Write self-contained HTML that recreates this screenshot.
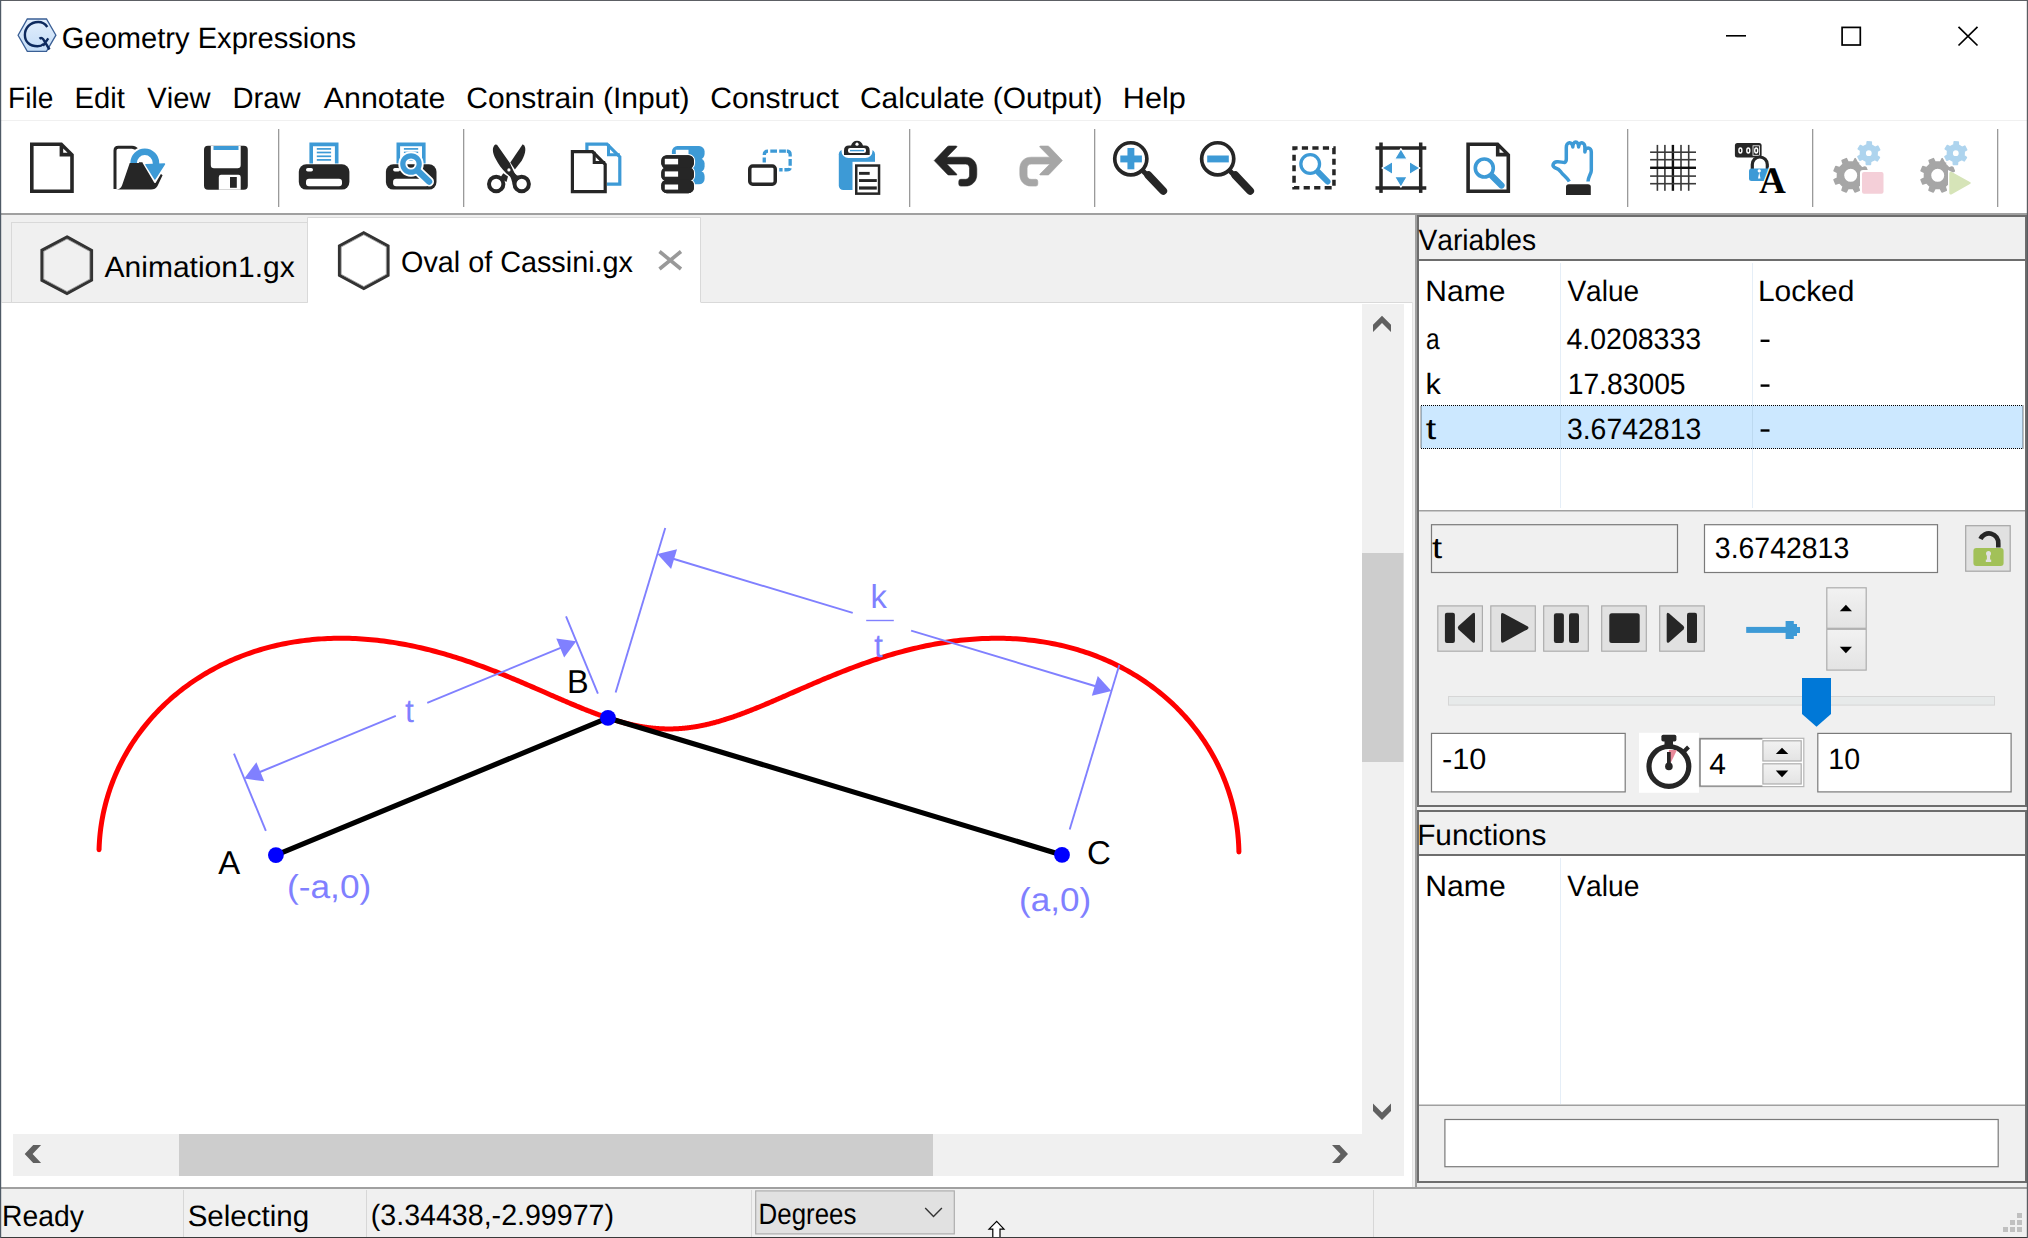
<!DOCTYPE html><html><head><meta charset="utf-8"><style>html,body{margin:0;padding:0;background:#fff;overflow:hidden;}svg{display:block;font-family:"Liberation Sans",sans-serif;font-kerning:none;text-rendering:geometricPrecision;}</style></head><body><svg width="2028" height="1238" viewBox="0 0 2028 1238"><rect x="0" y="0" width="2028" height="1238" fill="#ffffff" />
<rect x="0" y="120" width="2028" height="1" fill="#f0f0f0" />
<rect x="0" y="213" width="2028" height="2" fill="#a0a0a0" />
<rect x="0" y="215" width="1416" height="88" fill="#f0f0f0" />
<defs><linearGradient id="hexg" x1="0" y1="0" x2="0" y2="1"><stop offset="0" stop-color="#e2eefc"/><stop offset="1" stop-color="#c4ddf7"/></linearGradient><linearGradient id="spin" x1="0" y1="0" x2="0" y2="1"><stop offset="0" stop-color="#f2f2f2"/><stop offset="1" stop-color="#e3e3e3"/></linearGradient></defs>
<polygon points="27.3,19 46.5,19 55.9,35.2 46.5,51.3 27.3,51.3 18.1,35.2" fill="url(#hexg)" stroke="#3a5f95" stroke-width="1.3"/>
<path d="M47.3,27 C45,23.5 42,22 38.3,22 C30,22 24.9,28 24.9,35 C24.9,42 30,46.3 37.5,46.3 C40,46.3 42,45.5 43.5,44" fill="none" stroke="#0d2a5e" stroke-width="2.4"/>
<path d="M39.5,38.8 Q41.5,37.2 43.2,39.2 L49.5,49.5 M48.3,38.4 L43,45.8" fill="none" stroke="#0d2a5e" stroke-width="2.4"/>
<text transform="translate(61.84,47.60) scale(0.9864,1)" font-size="29.5" fill="#000">Geometry Expressions</text>
<rect x="1726" y="35" width="20" height="1.6" fill="#000" />
<rect x="1842.1" y="27.4" width="18.2" height="17.6" fill="none" stroke="#000" stroke-width="1.7"/>
<path d="M1958.5,26.8 L1977.5,45.5 M1977.5,26.8 L1958.5,45.5" stroke="#000" stroke-width="1.7"/>
<text transform="translate(8.00,108.10) scale(0.9520,1)" font-size="29.5" fill="#000">File</text>
<text transform="translate(74.61,108.10) scale(0.9876,1)" font-size="29.5" fill="#000">Edit</text>
<text transform="translate(147.37,108.10) scale(0.9877,1)" font-size="29.5" fill="#000">View</text>
<text transform="translate(232.41,108.10) scale(0.9896,1)" font-size="29.5" fill="#000">Draw</text>
<text transform="translate(323.74,108.10) scale(1.0297,1)" font-size="29.5" fill="#000">Annotate</text>
<text transform="translate(466.28,108.10) scale(1.0163,1)" font-size="29.5" fill="#000">Constrain (Input)</text>
<text transform="translate(710.27,108.10) scale(1.0183,1)" font-size="29.5" fill="#000">Construct</text>
<text transform="translate(859.98,108.10) scale(1.0129,1)" font-size="29.5" fill="#000">Calculate (Output)</text>
<text transform="translate(1122.79,108.10) scale(1.0384,1)" font-size="29.5" fill="#000">Help</text>
<rect x="278" y="129" width="1.3" height="78" fill="#9a9a9a" />
<rect x="463" y="129" width="1.3" height="78" fill="#9a9a9a" />
<rect x="909" y="129" width="1.3" height="78" fill="#9a9a9a" />
<rect x="1094" y="129" width="1.3" height="78" fill="#9a9a9a" />
<rect x="1627" y="129" width="1.3" height="78" fill="#9a9a9a" />
<rect x="1812" y="129" width="1.3" height="78" fill="#9a9a9a" />
<rect x="1997" y="129" width="1.3" height="78" fill="#9a9a9a" />
<polygon points="30,142.4 62,142.4 73.8,154.2 73.8,193 30,193" fill="#262626"/>
<polygon points="33.6,146 59.6,146 59.6,156.4 70.2,156.4 70.2,189.4 33.6,189.4" fill="#fff"/>
<polygon points="63.2,148.4 63.2,152.8 67.6,152.8" fill="#fff"/>
<path d="M115,189 V150.5 Q115,147.3 118.3,147.3 H132 Q135.5,147.5 138,150.5" fill="none" stroke="#262626" stroke-width="3"/>
<path d="M116,189.6 Q120.5,189.6 122,185.5 L130,162.3 H146 L162.6,175.3 L157.5,186 Q155.5,189.6 151,189.6 Z" fill="#262626"/>
<path d="M133.6,163 A11.2,11.2 0 0 1 156,163" fill="none" stroke="#fff" stroke-width="10.5"/>
<polygon points="143.5,162.6 166.8,162 155,182" fill="#fff" stroke="#fff" stroke-width="2" stroke-linejoin="round"/>
<path d="M133.6,163 A11.2,11.2 0 0 1 156,163 V165" fill="none" stroke="#3d9ad6" stroke-width="6.5"/>
<polygon points="146,164.7 164.4,164.1 154.9,178.9" fill="#3d9ad6" stroke="#3d9ad6" stroke-width="1.6" stroke-linejoin="round"/>
<rect x="204" y="145.8" width="43.8" height="44" rx="4" fill="#262626"/>
<path d="M210.8,145.8 H240.7 V165 Q240.7,168.2 237.5,168.2 H214 Q210.8,168.2 210.8,165 Z" fill="#fff"/>
<rect x="213.5" y="146" width="25" height="4" fill="#3d9ad6" />
<path d="M218.8,189.8 V177 Q218.8,174.7 221,174.7 H238.5 Q240.7,174.7 240.7,177 V189.8 Z" fill="#fff"/>
<rect x="230" y="177" width="6.8" height="10.8" fill="#262626" />
<path d="M311.2,163.5 V144.4 H336.7 V163.5" fill="none" stroke="#3d9ad6" stroke-width="3.6"/>
<rect x="316.8" y="148.05" width="14.3" height="1.7" fill="#3d9ad6" />
<rect x="316.8" y="151.65" width="14.3" height="1.7" fill="#3d9ad6" />
<rect x="316.8" y="155.45000000000002" width="14.3" height="1.7" fill="#3d9ad6" />
<rect x="316.8" y="159.05" width="14.3" height="1.7" fill="#3d9ad6" />
<rect x="298.8" y="164.3" width="50.6" height="25.3" rx="7.5" fill="#262626"/>
<rect x="306" y="178.8" width="36" height="7.4" rx="3" fill="#fff"/>
<rect x="306" y="168" width="7" height="3.6" rx="1.8" fill="#fff"/>
<path d="M398.29999999999995,163.5 V144.4 H423.79999999999995 V163.5" fill="none" stroke="#3d9ad6" stroke-width="3.6"/>
<rect x="403.9" y="148.05" width="14.3" height="1.7" fill="#3d9ad6" />
<rect x="403.9" y="151.65" width="14.3" height="1.7" fill="#3d9ad6" />
<rect x="403.9" y="155.45000000000002" width="14.3" height="1.7" fill="#3d9ad6" />
<rect x="403.9" y="159.05" width="14.3" height="1.7" fill="#3d9ad6" />
<rect x="385.9" y="164.3" width="50.6" height="25.3" rx="7.5" fill="#262626"/>
<rect x="393.1" y="178.8" width="36" height="7.4" rx="3" fill="#fff"/>
<rect x="393.1" y="168" width="7" height="3.6" rx="1.8" fill="#fff"/>
<circle cx="411" cy="164" r="8.2" fill="none" stroke="#fff" stroke-width="9"/>
<line x1="418.5" y1="171.5" x2="429" y2="181.5" stroke="#fff" stroke-width="10" stroke-linecap="round"/>
<circle cx="411" cy="164" r="8.2" fill="none" stroke="#3d9ad6" stroke-width="5.2"/>
<line x1="418.5" y1="171.5" x2="429" y2="181.5" stroke="#3d9ad6" stroke-width="6.5" stroke-linecap="round"/>
<path d="M495.3,144.5 C491.5,147.5 492.5,153.5 496,159.5 C498.5,164.5 501.5,168.5 506.2,173.2 L509.5,176 L516,175.8 C514,172 512.2,168 510,163.2 L497,144.8 Z" fill="#262626"/>
<path d="M522.7,144.3 C526.5,146.5 526.2,152.5 521.7,160.8 L514.9,169.5 L510.3,162.6 Z" fill="#262626"/>
<path d="M503.3,173.2 L508,176.5 L506.5,182 L500,178 Z" fill="#262626"/>
<path d="M506,172.6 Q510,175.5 511.2,179 L512.8,184.5 L521.7,177 L516.8,175.2 L513.8,172.6 Z" fill="#262626"/>
<circle cx="508.9" cy="169.9" r="1.6" fill="#fff"/>
<circle cx="496.2" cy="184" r="7.2" fill="none" stroke="#262626" stroke-width="4"/>
<circle cx="521.7" cy="184" r="7.2" fill="none" stroke="#262626" stroke-width="4"/>
<path d="M586.9,150.5 V144.1 H607 L619.8,156.8 V184.1 H607" fill="none" stroke="#3d9ad6" stroke-width="3.2"/>
<path d="M608.5,144.3 V154.8 H619.8" fill="none" stroke="#3d9ad6" stroke-width="3"/>
<path d="M572.4,151.6 H592.5 L605.2,164.5 V191.7 H572.4 Z" fill="#fff" stroke="#262626" stroke-width="3.2"/>
<path d="M594.2,151.8 V162.5 H605.2" fill="none" stroke="#262626" stroke-width="3"/>
<rect x="671.9" y="146.1" width="32.7" height="13.5" rx="5.5" fill="#3d9ad6"/>
<rect x="671.9" y="158.1" width="32.7" height="14.0" rx="5.5" fill="#3d9ad6"/>
<rect x="671.9" y="170.6" width="32.7" height="13.700000000000017" rx="5.5" fill="#3d9ad6"/>
<rect x="675.8" y="149.8" width="12.7" height="4.5" fill="#fff" />
<rect x="661.3" y="155.2" width="32.6" height="13.600000000000023" rx="5.5" fill="#262626" stroke="#fff" stroke-width="2.4" paint-order="stroke"/>
<rect x="661.3" y="167.2" width="32.6" height="14.0" rx="5.5" fill="#262626" stroke="#fff" stroke-width="2.4" paint-order="stroke"/>
<rect x="661.3" y="179.7" width="32.6" height="13.5" rx="5.5" fill="#262626" stroke="#fff" stroke-width="2.4" paint-order="stroke"/>
<rect x="661.3" y="155.2" width="32.6" height="13.600000000000023" rx="5.5" fill="#262626"/>
<rect x="661.3" y="167.2" width="32.6" height="14.0" rx="5.5" fill="#262626"/>
<rect x="661.3" y="179.7" width="32.6" height="13.5" rx="5.5" fill="#262626"/>
<rect x="664.8" y="158.8" width="13.3" height="5.599999999999994" fill="#fff" />
<rect x="664.8" y="171.4" width="13.3" height="5.299999999999983" fill="#fff" />
<rect x="664.8" y="184.5" width="13.3" height="5.099999999999994" fill="#fff" />
<path d="M764.25,155 Q764.25,151.15 767.9,151.15 H768 M764.25,157.5 V162.5 M770.3,151.15 H777 M779.2,151.15 H785.9 M788.4,151.15 H786.8 Q790.15,151.15 790.15,154.6 V156.6 M790.15,159.1 V165.7 M790.15,168.2 Q789.8,169.75 786.7,169.75 H784.4 M782.6,169.75 H779.2" fill="none" stroke="#3d9ad6" stroke-width="3.3"/>
<rect x="749.75" y="166.05" width="25.5" height="18.2" rx="3" fill="#fff" stroke="#262626" stroke-width="3.5"/>
<rect x="838.8" y="149.7" width="36.2" height="40.3" rx="4.5" fill="#3d9ad6"/>
<rect x="841.5" y="139" width="31" height="19" rx="7" fill="#fff"/>
<path d="M844,155 V150.5 Q844,145.5 849,145.5 H851 Q852.5,140.8 857,140.8 Q861.5,140.8 863,145.5 H865 Q869.7,145.5 869.7,150.5 V155 Z" fill="#262626"/>
<circle cx="857" cy="144.2" r="1.6" fill="#fff"/>
<rect x="848" y="148" width="18" height="5" rx="2" fill="#fff"/>
<rect x="850" y="149.9" width="14" height="1.4" fill="#3d9ad6" />
<rect x="852.5" y="161.8" width="30.3" height="35.6" fill="#fff"/>
<rect x="856.25" y="165.55" width="22.8" height="28.1" fill="#fff" stroke="#262626" stroke-width="2.5"/>
<rect x="859" y="171.9" width="10.7" height="2.9" fill="#262626" />
<rect x="859" y="179.1" width="17.8" height="2.9" fill="#262626" />
<rect x="859" y="186.4" width="17.8" height="3.2" fill="#262626" />
<path d="M934.2,160.6 L947.5,146.6 Q948.2,146 949,146 H956.5 Q957.3,146.4 956.6,147.2 L946.8,157.2 H965.5 C972.5,157.2 976.8,162 976.8,169 V174.5 C976.8,181.3 972,186.1 965.5,186.1 H960.8 Q958.8,186.1 958.8,184 V181.4 Q958.8,179.3 960.8,179.3 H965.5 C968.1,179.3 969.5,177.5 969.5,175 V168.5 C969.5,166 968.1,164.1 965.5,164.1 H946.8 L956.6,174 Q957.3,174.8 956.5,175 H949 Q948.2,175 947.5,174.4 Z" fill="#262626" stroke="#262626" stroke-width="0.6" stroke-linejoin="round"/>
<path transform="translate(1996.6,0) scale(-1,1)" d="M934.2,160.6 L947.5,146.6 Q948.2,146 949,146 H956.5 Q957.3,146.4 956.6,147.2 L946.8,157.2 H965.5 C972.5,157.2 976.8,162 976.8,169 V174.5 C976.8,181.3 972,186.1 965.5,186.1 H960.8 Q958.8,186.1 958.8,184 V181.4 Q958.8,179.3 960.8,179.3 H965.5 C968.1,179.3 969.5,177.5 969.5,175 V168.5 C969.5,166 968.1,164.1 965.5,164.1 H946.8 L956.6,174 Q957.3,174.8 956.5,175 H949 Q948.2,175 947.5,174.4 Z" fill="#a6a6a6" stroke="#a6a6a6" stroke-width="0.6" stroke-linejoin="round"/>
<circle cx="1130.8" cy="158.8" r="16.05" fill="none" stroke="#262626" stroke-width="3.7"/>
<line x1="1141.8" y1="169.8" x2="1147.8" y2="175.8" stroke="#262626" stroke-width="5"/>
<line x1="1148.3999999999999" y1="175.20000000000002" x2="1163.2" y2="190.9" stroke="#262626" stroke-width="7.9" stroke-linecap="round"/>
<rect x="1120.3" y="155.5" width="21.6" height="6.9" fill="#3d9ad6"/>
<rect x="1127.45" y="148.0" width="6.9" height="21.3" fill="#3d9ad6"/>
<circle cx="1217.7" cy="158.8" r="16.05" fill="none" stroke="#262626" stroke-width="3.7"/>
<line x1="1228.7" y1="169.8" x2="1234.7" y2="175.8" stroke="#262626" stroke-width="5"/>
<line x1="1235.3" y1="175.20000000000002" x2="1250.1000000000001" y2="190.9" stroke="#262626" stroke-width="7.9" stroke-linecap="round"/>
<rect x="1207.2" y="155.5" width="21.6" height="6.9" fill="#3d9ad6"/>
<rect x="1294.05" y="147.95" width="39.9" height="39.9" fill="none" stroke="#262626" stroke-width="3.5" stroke-dasharray="3.5,4.3,6.2,4.3,6.2,4.3,6.2,4.3,3.5,0"/>
<circle cx="1310.2" cy="164" r="9.35" fill="none" stroke="#3d9ad6" stroke-width="3.3"/>
<line x1="1318.5" y1="172.3" x2="1327.5" y2="181.5" stroke="#3d9ad6" stroke-width="6" stroke-linecap="round"/>
<rect x="1375.5" y="146.25" width="50.8" height="3.5" fill="#262626" />
<rect x="1375.5" y="186.25" width="50.8" height="3.5" fill="#262626" />
<rect x="1379.25" y="142.5" width="3.5" height="50.4" fill="#262626" />
<rect x="1418.95" y="142.5" width="3.5" height="50.4" fill="#262626" />
<polygon points="1394.5,159.2 1407.3,159.2 1400.9,148.6" fill="#3d9ad6" stroke="#fff" stroke-width="1.2" stroke-linejoin="round"/>
<polygon points="1394.5,176.6 1407.3,176.6 1400.9,187.2" fill="#3d9ad6" stroke="#fff" stroke-width="1.2" stroke-linejoin="round"/>
<polygon points="1392.6,161.6 1392.6,174.4 1382,168" fill="#3d9ad6" stroke="#fff" stroke-width="1.2" stroke-linejoin="round"/>
<polygon points="1409.4,161.6 1409.4,174.4 1420,168" fill="#3d9ad6" stroke="#fff" stroke-width="1.2" stroke-linejoin="round"/>
<g transform="translate(1436.3,0)"><polygon points="30,142.4 62,142.4 73.8,154.2 73.8,193 30,193" fill="#262626"/><polygon points="33.6,146 59.6,146 59.6,156.4 70.2,156.4 70.2,189.4 33.6,189.4" fill="#fff"/><polygon points="63.2,148.4 63.2,152.8 67.6,152.8" fill="#fff"/></g>
<circle cx="1484.3" cy="168" r="9" fill="none" stroke="#3d9ad6" stroke-width="3.6"/>
<line x1="1492" y1="176" x2="1501.5" y2="185.5" stroke="#3d9ad6" stroke-width="6.2" stroke-linecap="round"/>
<path d="M1569.3,181.5 C1567,177.5 1563.5,175.5 1561,172 C1559,169 1557.5,168.5 1554.5,167.5 C1551.8,166 1553,162.2 1557,161.8 C1560,161.5 1562,162.5 1564.5,162.5 C1566,162 1566.3,160.5 1566.3,159 V147.5 A3.25,4.5 0 0 1 1572.8,147 A2.9,5 0 0 1 1578.6,147 A3.15,4.5 0 0 1 1584.9,147.5 V152 A3.2,4 0 0 1 1591.3,152 V170.5 C1591.3,173.5 1588.3,176.5 1588,181.5" fill="none" stroke="#3d9ad6" stroke-width="3.5" stroke-linejoin="round"/>
<path d="M1566,195 V187 Q1566,184.3 1568.8,184.3 H1588 Q1590.8,184.3 1590.8,187 V195 Z" fill="#262626"/>
<rect x="1656.6000000000001" y="144.9" width="1.6" height="45.9" fill="#3a3a3a" />
<rect x="1664.1000000000001" y="144.9" width="1.6" height="45.9" fill="#3a3a3a" />
<rect x="1671.7" y="144.9" width="2.4" height="45.9" fill="#111" />
<rect x="1680.2" y="144.9" width="1.6" height="45.9" fill="#3a3a3a" />
<rect x="1687.9" y="144.9" width="1.6" height="45.9" fill="#3a3a3a" />
<rect x="1650.1" y="151.39999999999998" width="45.9" height="1.6" fill="#3a3a3a" />
<rect x="1650.1" y="158.89999999999998" width="45.9" height="1.6" fill="#3a3a3a" />
<rect x="1650.1" y="166.60000000000002" width="45.9" height="2.4" fill="#111" />
<rect x="1650.1" y="175.29999999999998" width="45.9" height="1.6" fill="#3a3a3a" />
<rect x="1650.1" y="182.89999999999998" width="45.9" height="1.6" fill="#3a3a3a" />
<rect x="1734.9" y="143" width="26.7" height="14.5" rx="2.5" fill="#262626"/>
<ellipse cx="1740.4" cy="150.5" rx="1.5" ry="2.5" fill="none" stroke="#fff" stroke-width="1.4"/>
<ellipse cx="1748.3" cy="150.5" rx="1.5" ry="2.5" fill="none" stroke="#fff" stroke-width="1.4"/>
<ellipse cx="1756.2" cy="150.5" rx="1.5" ry="2.5" fill="none" stroke="#fff" stroke-width="1.4"/>
<rect x="1753" y="145.8" width="6.5" height="9.5" fill="none" stroke="#fff" stroke-width="0.8"/>
<path d="M1752.3,169 V164.5 A7.5,7.5 0 0 1 1767.3,164.5 V169" fill="none" stroke="#262626" stroke-width="3.2"/>
<path d="M1751.5,168.5 H1770.5 L1764,181 H1751.5 Q1749,181 1749,178.5 V171 Q1749,168.5 1751.5,168.5 Z" fill="#3d9ad6"/>
<path d="M1759.2,172.5 a1.6,1.6 0 1 1 0.1,0 L1760.5,178.5 H1758 Z" fill="#fff"/>
<text stroke="#fff" stroke-width="2.5" paint-order="stroke" font-family="Liberation Serif, serif" transform="translate(1758.94,192.60) scale(0.9909,1)" font-size="37.5" fill="#000" font-weight="bold">A</text>
<path d="M1863.73,177.94 L1867.31,179.77 L1865.54,183.99 L1861.73,182.73 L1861.11,183.57 L1858.90,185.77 L1858.05,186.39 L1859.28,190.20 L1855.05,191.94 L1853.25,188.35 L1852.22,188.51 L1849.09,188.50 L1848.06,188.33 L1846.23,191.91 L1842.01,190.14 L1843.27,186.33 L1842.43,185.71 L1840.23,183.50 L1839.61,182.65 L1835.80,183.88 L1834.06,179.65 L1837.65,177.85 L1837.49,176.82 L1837.50,173.69 L1837.67,172.66 L1834.09,170.83 L1835.86,166.61 L1839.67,167.87 L1840.29,167.03 L1842.50,164.83 L1843.35,164.21 L1842.12,160.40 L1846.35,158.66 L1848.15,162.25 L1849.18,162.09 L1852.31,162.10 L1853.34,162.27 L1855.17,158.69 L1859.39,160.46 L1858.13,164.27 L1858.97,164.89 L1861.17,167.10 L1861.79,167.95 L1865.60,166.72 L1867.34,170.95 L1863.75,172.75 L1863.91,173.78 L1863.90,176.91 Z M1858.0,175.3 A7.3,7.3 0 1 0 1843.4,175.3 A7.3,7.3 0 1 0 1858.0,175.3 Z" fill="#a6a6a6" fill-rule="evenodd" stroke="#a6a6a6" stroke-width="1.6" stroke-linejoin="round"/>
<path d="M1876.82,155.68 L1879.37,157.47 L1877.22,160.89 L1874.51,159.36 L1873.83,159.93 L1871.51,161.15 L1870.66,161.39 L1870.39,164.49 L1866.35,164.33 L1866.32,161.22 L1865.49,160.92 L1863.27,159.52 L1862.64,158.91 L1859.82,160.22 L1857.93,156.65 L1860.61,155.06 L1860.46,154.20 L1860.56,151.57 L1860.78,150.72 L1858.23,148.93 L1860.38,145.51 L1863.09,147.04 L1863.77,146.47 L1866.09,145.25 L1866.94,145.01 L1867.21,141.91 L1871.25,142.07 L1871.28,145.18 L1872.11,145.48 L1874.33,146.88 L1874.96,147.49 L1877.78,146.18 L1879.67,149.75 L1876.99,151.34 L1877.14,152.20 L1877.04,154.83 Z M1872.5,153.2 A3.7,3.7 0 1 0 1865.1,153.2 A3.7,3.7 0 1 0 1872.5,153.2 Z" fill="#fff" fill-rule="evenodd" stroke="#fff" stroke-width="5" stroke-linejoin="round"/>
<path d="M1876.82,155.68 L1879.37,157.47 L1877.22,160.89 L1874.51,159.36 L1873.83,159.93 L1871.51,161.15 L1870.66,161.39 L1870.39,164.49 L1866.35,164.33 L1866.32,161.22 L1865.49,160.92 L1863.27,159.52 L1862.64,158.91 L1859.82,160.22 L1857.93,156.65 L1860.61,155.06 L1860.46,154.20 L1860.56,151.57 L1860.78,150.72 L1858.23,148.93 L1860.38,145.51 L1863.09,147.04 L1863.77,146.47 L1866.09,145.25 L1866.94,145.01 L1867.21,141.91 L1871.25,142.07 L1871.28,145.18 L1872.11,145.48 L1874.33,146.88 L1874.96,147.49 L1877.78,146.18 L1879.67,149.75 L1876.99,151.34 L1877.14,152.20 L1877.04,154.83 Z M1872.5,153.2 A3.7,3.7 0 1 0 1865.1,153.2 A3.7,3.7 0 1 0 1872.5,153.2 Z" fill="#aed4ee" fill-rule="evenodd" stroke="#aed4ee" stroke-width="1.6" stroke-linejoin="round"/>
<rect x="1860" y="170" width="25.5" height="25.7" rx="3" fill="#fff"/>
<rect x="1862" y="172.1" width="21.5" height="21.6" rx="2" fill="#f4cfd8"/>
<path d="M1950.73,177.94 L1954.31,179.77 L1952.54,183.99 L1948.73,182.73 L1948.11,183.57 L1945.90,185.77 L1945.05,186.39 L1946.28,190.20 L1942.05,191.94 L1940.25,188.35 L1939.22,188.51 L1936.09,188.50 L1935.06,188.33 L1933.23,191.91 L1929.01,190.14 L1930.27,186.33 L1929.43,185.71 L1927.23,183.50 L1926.61,182.65 L1922.80,183.88 L1921.06,179.65 L1924.65,177.85 L1924.49,176.82 L1924.50,173.69 L1924.67,172.66 L1921.09,170.83 L1922.86,166.61 L1926.67,167.87 L1927.29,167.03 L1929.50,164.83 L1930.35,164.21 L1929.12,160.40 L1933.35,158.66 L1935.15,162.25 L1936.18,162.09 L1939.31,162.10 L1940.34,162.27 L1942.17,158.69 L1946.39,160.46 L1945.13,164.27 L1945.97,164.89 L1948.17,167.10 L1948.79,167.95 L1952.60,166.72 L1954.34,170.95 L1950.75,172.75 L1950.91,173.78 L1950.90,176.91 Z M1945.0,175.3 A7.3,7.3 0 1 0 1930.4,175.3 A7.3,7.3 0 1 0 1945.0,175.3 Z" fill="#a6a6a6" fill-rule="evenodd" stroke="#a6a6a6" stroke-width="1.6" stroke-linejoin="round"/>
<path d="M1963.82,155.68 L1966.37,157.47 L1964.22,160.89 L1961.51,159.36 L1960.83,159.93 L1958.51,161.15 L1957.66,161.39 L1957.39,164.49 L1953.35,164.33 L1953.32,161.22 L1952.49,160.92 L1950.27,159.52 L1949.64,158.91 L1946.82,160.22 L1944.93,156.65 L1947.61,155.06 L1947.46,154.20 L1947.56,151.57 L1947.78,150.72 L1945.23,148.93 L1947.38,145.51 L1950.09,147.04 L1950.77,146.47 L1953.09,145.25 L1953.94,145.01 L1954.21,141.91 L1958.25,142.07 L1958.28,145.18 L1959.11,145.48 L1961.33,146.88 L1961.96,147.49 L1964.78,146.18 L1966.67,149.75 L1963.99,151.34 L1964.14,152.20 L1964.04,154.83 Z M1959.5,153.2 A3.7,3.7 0 1 0 1952.1,153.2 A3.7,3.7 0 1 0 1959.5,153.2 Z" fill="#fff" fill-rule="evenodd" stroke="#fff" stroke-width="5" stroke-linejoin="round"/>
<path d="M1963.82,155.68 L1966.37,157.47 L1964.22,160.89 L1961.51,159.36 L1960.83,159.93 L1958.51,161.15 L1957.66,161.39 L1957.39,164.49 L1953.35,164.33 L1953.32,161.22 L1952.49,160.92 L1950.27,159.52 L1949.64,158.91 L1946.82,160.22 L1944.93,156.65 L1947.61,155.06 L1947.46,154.20 L1947.56,151.57 L1947.78,150.72 L1945.23,148.93 L1947.38,145.51 L1950.09,147.04 L1950.77,146.47 L1953.09,145.25 L1953.94,145.01 L1954.21,141.91 L1958.25,142.07 L1958.28,145.18 L1959.11,145.48 L1961.33,146.88 L1961.96,147.49 L1964.78,146.18 L1966.67,149.75 L1963.99,151.34 L1964.14,152.20 L1964.04,154.83 Z M1959.5,153.2 A3.7,3.7 0 1 0 1952.1,153.2 A3.7,3.7 0 1 0 1959.5,153.2 Z" fill="#aed4ee" fill-rule="evenodd" stroke="#aed4ee" stroke-width="1.6" stroke-linejoin="round"/>
<polygon points="1948,170 1973,183 1948,196" fill="#fff"/>
<path d="M1951,172.5 L1970,183 L1951,193.8 Q1950,194 1950,192.5 V174 Q1950,172 1951,172.5 Z" fill="#d6e4b8" stroke="#d6e4b8" stroke-width="1.5" stroke-linejoin="round"/>
<rect x="0" y="215" width="1416" height="88" fill="#f0f0f0" />
<rect x="11.5" y="222.5" width="296" height="80" fill="#f0f0f0" stroke="#d9d9d9" stroke-width="1"/>
<rect x="2" y="302" width="1411" height="885" fill="#ffffff" />
<rect x="2" y="302" width="306" height="1" fill="#d9d9d9" />
<rect x="701" y="302" width="712" height="1" fill="#d9d9d9" />
<path d="M307.5,302.5 V217.5 H700.5 V302.5" fill="#ffffff" stroke="#d9d9d9" stroke-width="1"/>
<polygon points="67,237 91.5,250.334 91.5,280.166 67,293.5 42,280.166 42,250.334" fill="none" stroke="#333" stroke-width="3.2"/>
<polygon points="67,237 91.5,250.334 91.5,280.166 67,293.5 42,280.166 42,250.334" fill="none" stroke="#999" stroke-width="0.9" transform="translate(67,265.25) scale(0.93) translate(-67,-265.25)"/>
<polygon points="363.8,232.8 388,245.9452 388,275.3548 363.8,288.5 339.5,275.3548 339.5,245.9452" fill="none" stroke="#333" stroke-width="3.2"/>
<polygon points="363.8,232.8 388,245.9452 388,275.3548 363.8,288.5 339.5,275.3548 339.5,245.9452" fill="none" stroke="#999" stroke-width="0.9" transform="translate(363.8,260.65) scale(0.93) translate(-363.8,-260.65)"/>
<text transform="translate(104.54,277.00) scale(1.0173,1)" font-size="29.5" fill="#000">Animation1.gx</text>
<text transform="translate(401.04,271.70) scale(0.9754,1)" font-size="29.5" fill="#000">Oval of Cassini.gx</text>
<path d="M659.5,251.5 L681,269 M681,251.5 L659.5,269" stroke="#999" stroke-width="3.6"/>
<rect x="1362" y="304" width="42" height="830" fill="#f0f0f0" />
<rect x="1362" y="553" width="41.5" height="209" fill="#cdcdcd" />
<rect x="13" y="1134" width="1391" height="42" fill="#f0f0f0" />
<rect x="179" y="1134" width="754" height="42" fill="#cdcdcd" />
<polygon points="1382,315.7 1391,324.7 1391,332 1382,323 1373,332 1373,324.7" fill="#606060"/>
<polygon points="1382,1120 1391,1111 1391,1103.6 1382,1112.6 1373,1103.6 1373,1111" fill="#606060"/>
<polygon points="24.7,1153.9 33.2,1145 41.1,1145 32.6,1153.9 41.1,1162.9 33.2,1162.9" fill="#606060"/>
<polygon points="1348,1153.9 1339.5,1145 1332,1145 1340.5,1153.9 1332,1162.9 1339.5,1162.9" fill="#606060"/>
<rect x="1412" y="302" width="1" height="886" fill="#e3e3e3" />
<rect x="1415" y="215" width="2" height="973" fill="#a0a0a0" />
<rect x="1413" y="215" width="2" height="973" fill="#f0f0f0" />
<path d="M99.05,849.70 L99.13,847.23 L99.24,844.75 L99.38,842.28 L99.55,839.81 L99.75,837.34 L99.98,834.87 L100.24,832.41 L100.53,829.95 L100.85,827.49 L101.21,825.03 L101.59,822.58 L102.00,820.14 L102.44,817.69 L102.91,815.25 L103.41,812.82 L103.95,810.39 L104.51,807.97 L105.10,805.55 L105.72,803.14 L106.37,800.73 L107.05,798.34 L107.76,795.94 L108.50,793.56 L109.27,791.18 L110.07,788.81 L110.90,786.45 L111.75,784.10 L112.64,781.76 L113.56,779.42 L114.50,777.10 L115.48,774.78 L116.48,772.48 L117.51,770.18 L118.57,767.89 L119.66,765.62 L120.78,763.36 L121.93,761.10 L123.10,758.86 L124.31,756.64 L125.54,754.42 L126.80,752.21 L128.09,750.02 L129.41,747.85 L130.75,745.68 L132.12,743.53 L133.53,741.39 L134.95,739.27 L136.41,737.16 L137.89,735.07 L139.40,732.99 L140.94,730.93 L142.50,728.88 L144.10,726.85 L145.71,724.83 L147.36,722.83 L149.03,720.85 L150.73,718.89 L152.45,716.94 L154.20,715.01 L155.98,713.10 L157.78,711.20 L159.61,709.33 L161.47,707.47 L163.35,705.63 L165.25,703.81 L167.18,702.01 L169.14,700.23 L171.12,698.47 L173.12,696.73 L175.15,695.02 L177.20,693.32 L179.28,691.64 L181.38,689.99 L183.51,688.35 L185.66,686.74 L187.83,685.15 L190.03,683.58 L192.24,682.04 L194.49,680.52 L196.75,679.02 L199.04,677.54 L201.35,676.09 L203.68,674.66 L206.04,673.26 L208.41,671.88 L210.81,670.52 L213.23,669.19 L215.67,667.89 L218.13,666.61 L220.61,665.35 L223.11,664.12 L225.64,662.92 L228.18,661.75 L230.74,660.60 L233.32,659.47 L235.92,658.38 L238.55,657.31 L241.18,656.27 L243.84,655.25 L246.52,654.26 L249.21,653.31 L251.93,652.37 L254.65,651.47 L257.40,650.60 L260.17,649.75 L262.95,648.94 L265.74,648.15 L268.56,647.39 L271.38,646.66 L274.23,645.96 L277.09,645.29 L279.96,644.65 L282.85,644.04 L285.75,643.46 L288.67,642.91 L291.60,642.39 L294.54,641.90 L297.50,641.44 L300.47,641.02 L303.45,640.62 L306.44,640.25 L309.44,639.92 L312.46,639.61 L315.48,639.34 L318.52,639.09 L321.56,638.88 L324.61,638.70 L327.67,638.55 L330.74,638.43 L333.82,638.35 L336.90,638.29 L339.99,638.26 L343.09,638.27 L346.19,638.30 L349.30,638.37 L352.41,638.47 L355.53,638.59 L358.64,638.75 L361.77,638.94 L364.89,639.15 L368.01,639.40 L371.14,639.67 L374.26,639.98 L377.39,640.31 L380.51,640.67 L383.63,641.06 L386.75,641.48 L389.87,641.93 L392.98,642.40 L396.08,642.89 L399.18,643.42 L402.27,643.97 L405.36,644.54 L408.44,645.14 L411.50,645.76 L414.56,646.40 L417.61,647.07 L420.65,647.76 L423.67,648.47 L426.68,649.20 L429.67,649.95 L432.65,650.71 L435.62,651.50 L438.56,652.30 L441.49,653.12 L444.40,653.95 L447.30,654.80 L450.17,655.66 L453.02,656.53 L455.85,657.42 L458.65,658.31 L461.43,659.22 L464.19,660.13 L466.92,661.06 L469.63,661.98 L472.31,662.92 L474.97,663.86 L477.59,664.80 L480.19,665.75 L482.76,666.70 L485.30,667.64 L487.81,668.59 L490.30,669.54 L492.75,670.49 L495.17,671.44 L497.56,672.38 L499.92,673.32 L502.25,674.26 L504.55,675.19 L506.82,676.12 L509.05,677.03 L511.26,677.95 L513.43,678.85 L515.57,679.75 L517.68,680.64 L519.76,681.52 L521.81,682.39 L523.83,683.26 L525.82,684.11 L527.78,684.95 L529.71,685.79 L531.60,686.61 L533.48,687.42 L535.32,688.22 L537.13,689.01 L538.91,689.79 L540.67,690.56 L542.40,691.32 L544.11,692.06 L545.78,692.80 L547.43,693.52 L549.06,694.23 L550.66,694.93 L552.23,695.62 L553.79,696.30 L555.31,696.97 L556.82,697.62 L558.30,698.27 L559.76,698.90 L561.20,699.52 L562.62,700.13 L564.01,700.73 L565.39,701.32 L566.74,701.90 L568.08,702.47 L569.39,703.03 L570.69,703.58 L571.97,704.12 L573.23,704.65 L574.47,705.17 L575.70,705.68 L576.91,706.19 L578.10,706.68 L579.28,707.16 L580.44,707.64 L581.59,708.10 L582.72,708.56 L583.83,709.01 L584.93,709.45 L586.02,709.88 L587.10,710.31 L588.16,710.72 L589.20,711.13 L590.24,711.53 L591.26,711.93 L592.27,712.31 L593.27,712.69 L594.26,713.07 L595.23,713.43 L596.20,713.79 L597.15,714.14 L598.10,714.49 L599.03,714.83 L599.95,715.16 L600.86,715.49 L601.77,715.81 L602.66,716.12 L603.55,716.43 L604.42,716.73 L605.29,717.03 L606.15,717.32 L607.00,717.61 L607.84,717.89 L608.67,718.17 L609.50,718.44 L610.32,718.70 L611.13,718.96 L611.93,719.22 L612.73,719.47 L613.52,719.72 L614.30,719.96 L615.08,720.19 L615.85,720.43 L616.61,720.65 L617.37,720.88 L618.12,721.10 L618.86,721.31 L619.60,721.52 L620.34,721.73 L621.06,721.93 L621.79,722.13 L622.50,722.33 L623.21,722.52 L623.92,722.71 L624.62,722.89 L625.32,723.07 L626.01,723.25 L626.70,723.42 L627.38,723.59 L628.06,723.76 L628.74,723.92 L629.41,724.08 L630.07,724.24 L630.74,724.39 L631.39,724.54 L632.05,724.69 L632.70,724.83 L633.35,724.97 L633.99,725.11 L634.63,725.25 L635.27,725.38 L635.90,725.51 L636.53,725.64 L637.16,725.76 L637.78,725.88 L638.40,726.00 L639.02,726.11 L639.63,726.23 L640.25,726.34 L640.86,726.44 L641.46,726.55 L642.07,726.65 L642.67,726.75 L643.27,726.85 L643.87,726.94 L644.46,727.03 L645.05,727.12 L645.64,727.21 L646.23,727.30 L646.82,727.38 L647.40,727.46 L647.98,727.54 L648.56,727.61 L649.14,727.69 L649.72,727.76 L650.29,727.83 L650.87,727.90 L651.44,727.96 L652.01,728.02 L652.58,728.08 L653.14,728.14 L653.71,728.20 L654.28,728.25 L654.84,728.30 L655.40,728.35 L655.96,728.40 L656.52,728.45 L657.08,728.49 L657.64,728.53 L658.20,728.57 L658.75,728.61 L659.31,728.64 L659.86,728.68 L660.41,728.71 L660.97,728.74 L661.52,728.76 L662.07,728.79 L662.62,728.81 L663.17,728.83 L663.72,728.85 L664.27,728.87 L664.82,728.89 L665.37,728.90 L665.92,728.91 L666.46,728.92 L667.01,728.93 L667.56,728.94 L668.11,728.94 L668.65,728.94 L669.20,728.94 L669.75,728.94 L670.30,728.94 L670.84,728.93 L671.39,728.92 L671.94,728.91 L672.49,728.90 L673.04,728.89 L673.59,728.87 L674.14,728.86 L674.69,728.84 L675.24,728.81 L675.79,728.79 L676.34,728.77 L676.89,728.74 L677.44,728.71 L678.00,728.68 L678.55,728.65 L679.11,728.61 L679.66,728.57 L680.22,728.53 L680.78,728.49 L681.33,728.45 L681.89,728.40 L682.45,728.36 L683.02,728.31 L683.58,728.25 L684.14,728.20 L684.71,728.15 L685.28,728.09 L685.85,728.03 L686.42,727.96 L686.99,727.90 L687.56,727.83 L688.14,727.76 L688.71,727.69 L689.29,727.62 L689.87,727.54 L690.45,727.47 L691.04,727.39 L691.62,727.30 L692.21,727.22 L692.80,727.13 L693.39,727.04 L693.99,726.95 L694.58,726.86 L695.18,726.76 L695.79,726.66 L696.39,726.56 L697.00,726.45 L697.61,726.34 L698.22,726.23 L698.83,726.12 L699.45,726.01 L700.07,725.89 L700.69,725.77 L701.32,725.65 L701.95,725.52 L702.58,725.39 L703.22,725.26 L703.86,725.12 L704.50,724.99 L705.15,724.85 L705.80,724.70 L706.45,724.55 L707.11,724.40 L707.77,724.25 L708.44,724.09 L709.11,723.94 L709.78,723.77 L710.46,723.61 L711.15,723.44 L711.83,723.26 L712.52,723.09 L713.22,722.91 L713.92,722.72 L714.63,722.54 L715.34,722.34 L716.06,722.15 L716.78,721.95 L717.51,721.75 L718.24,721.54 L718.98,721.33 L719.72,721.11 L720.47,720.90 L721.23,720.67 L721.99,720.44 L722.76,720.21 L723.54,719.98 L724.32,719.73 L725.11,719.49 L725.90,719.24 L726.71,718.98 L727.52,718.72 L728.34,718.46 L729.16,718.19 L729.99,717.91 L730.84,717.63 L731.68,717.35 L732.54,717.05 L733.41,716.76 L734.28,716.46 L735.17,716.15 L736.06,715.83 L736.96,715.51 L737.88,715.19 L738.80,714.85 L739.73,714.52 L740.67,714.17 L741.63,713.82 L742.59,713.46 L743.56,713.10 L744.55,712.72 L745.55,712.34 L746.56,711.96 L747.58,711.57 L748.61,711.16 L749.66,710.76 L750.72,710.34 L751.79,709.92 L752.88,709.48 L753.98,709.04 L755.10,708.60 L756.22,708.14 L757.37,707.67 L758.53,707.20 L759.70,706.72 L760.90,706.23 L762.10,705.72 L763.33,705.21 L764.57,704.69 L765.83,704.17 L767.11,703.63 L768.40,703.08 L769.72,702.52 L771.05,701.95 L772.41,701.37 L773.78,700.78 L775.17,700.18 L776.59,699.57 L778.02,698.95 L779.48,698.32 L780.96,697.67 L782.47,697.02 L783.99,696.35 L785.54,695.68 L787.12,694.99 L788.71,694.29 L790.34,693.58 L791.99,692.86 L793.66,692.12 L795.36,691.38 L797.09,690.62 L798.85,689.85 L800.63,689.08 L802.44,688.29 L804.28,687.49 L806.15,686.67 L808.04,685.85 L809.97,685.02 L811.93,684.18 L813.91,683.32 L815.93,682.46 L817.97,681.59 L820.05,680.71 L822.16,679.82 L824.30,678.92 L826.47,678.02 L828.67,677.11 L830.91,676.19 L833.17,675.26 L835.47,674.33 L837.79,673.40 L840.15,672.46 L842.54,671.51 L844.96,670.57 L847.41,669.62 L849.89,668.67 L852.40,667.72 L854.94,666.77 L857.51,665.82 L860.10,664.88 L862.73,663.93 L865.38,662.99 L868.06,662.06 L870.76,661.13 L873.49,660.21 L876.25,659.29 L879.03,658.39 L881.83,657.49 L884.66,656.60 L887.51,655.73 L890.38,654.87 L893.27,654.02 L896.18,653.18 L899.10,652.36 L902.05,651.56 L905.01,650.77 L907.99,650.01 L910.99,649.25 L913.99,648.52 L917.02,647.81 L920.05,647.12 L923.10,646.46 L926.15,645.81 L929.22,645.19 L932.30,644.59 L935.38,644.01 L938.47,643.46 L941.57,642.93 L944.68,642.43 L947.79,641.96 L950.90,641.51 L954.02,641.10 L957.14,640.70 L960.27,640.34 L963.39,640.00 L966.51,639.70 L969.64,639.42 L972.76,639.17 L975.89,638.95 L979.01,638.76 L982.13,638.60 L985.24,638.47 L988.36,638.38 L991.46,638.31 L994.56,638.27 L997.66,638.26 L1000.75,638.29 L1003.84,638.34 L1006.91,638.42 L1009.98,638.54 L1013.05,638.69 L1016.10,638.87 L1019.14,639.08 L1022.18,639.32 L1025.20,639.59 L1028.22,639.89 L1031.22,640.22 L1034.22,640.59 L1037.20,640.98 L1040.17,641.41 L1043.12,641.86 L1046.07,642.35 L1049.00,642.87 L1051.92,643.42 L1054.82,643.99 L1057.71,644.60 L1060.59,645.24 L1063.45,645.91 L1066.29,646.60 L1069.12,647.33 L1071.94,648.09 L1074.73,648.87 L1077.52,649.69 L1080.28,650.53 L1083.03,651.40 L1085.76,652.30 L1088.47,653.23 L1091.17,654.19 L1093.85,655.17 L1096.51,656.18 L1099.15,657.22 L1101.77,658.29 L1104.37,659.39 L1106.96,660.51 L1109.52,661.65 L1112.06,662.83 L1114.59,664.03 L1117.09,665.26 L1119.58,666.51 L1122.04,667.79 L1124.48,669.09 L1126.90,670.42 L1129.30,671.77 L1131.68,673.15 L1134.03,674.55 L1136.37,675.98 L1138.68,677.43 L1140.97,678.90 L1143.24,680.40 L1145.48,681.92 L1147.70,683.46 L1149.90,685.03 L1152.07,686.61 L1154.22,688.22 L1156.35,689.86 L1158.45,691.51 L1160.53,693.18 L1162.59,694.88 L1164.62,696.60 L1166.63,698.34 L1168.61,700.09 L1170.57,701.87 L1172.50,703.67 L1174.40,705.49 L1176.29,707.32 L1178.14,709.18 L1179.97,711.05 L1181.78,712.95 L1183.56,714.86 L1185.31,716.79 L1187.03,718.73 L1188.74,720.70 L1190.41,722.68 L1192.06,724.67 L1193.68,726.69 L1195.27,728.72 L1196.84,730.76 L1198.38,732.83 L1199.89,734.90 L1201.37,737.00 L1202.83,739.10 L1204.26,741.22 L1205.67,743.36 L1207.04,745.51 L1208.39,747.67 L1209.71,749.85 L1211.00,752.04 L1212.26,754.24 L1213.50,756.46 L1214.70,758.69 L1215.88,760.93 L1217.03,763.18 L1218.15,765.44 L1219.24,767.71 L1220.31,770.00 L1221.34,772.29 L1222.35,774.60 L1223.32,776.91 L1224.27,779.24 L1225.19,781.57 L1226.08,783.92 L1226.94,786.27 L1227.77,788.63 L1228.57,791.00 L1229.34,793.37 L1230.08,795.76 L1230.79,798.15 L1231.48,800.54 L1232.13,802.95 L1232.75,805.36 L1233.35,807.78 L1233.91,810.20 L1234.44,812.63 L1234.95,815.06 L1235.42,817.50 L1235.87,819.94 L1236.28,822.39 L1236.66,824.84 L1237.02,827.30 L1237.34,829.75 L1237.64,832.22 L1237.90,834.68 L1238.13,837.15 L1238.34,839.61 L1238.51,842.08 L1238.65,844.56 L1238.76,847.03 L1238.85,849.50 L1238.90,851.98" fill="none" stroke="#ff0000" stroke-width="5" stroke-linecap="round" stroke-linejoin="round"/>
<polyline points="275.9,855.1 607.95,717.9 1062.0,854.9" fill="none" stroke="#000" stroke-width="5.2" stroke-linejoin="round"/>
<line x1="265.86" y1="830.79" x2="233.97" y2="753.62" stroke="#8080ff" stroke-width="1.9"/>
<line x1="597.91" y1="693.59" x2="566.02" y2="616.42" stroke="#8080ff" stroke-width="1.9"/>
<line x1="258.72" y1="772.50" x2="395.81" y2="715.85" stroke="#8080ff" stroke-width="1.9"/>
<line x1="427.24" y1="702.87" x2="561.82" y2="647.26" stroke="#8080ff" stroke-width="1.9"/>
<polygon points="244.24,778.48 256.39,762.32 264.26,781.36" fill="#8080ff"/>
<polygon points="576.29,641.28 556.28,638.41 564.14,657.45" fill="#8080ff"/>
<line x1="615.63" y1="692.43" x2="665.26" y2="527.96" stroke="#8080ff" stroke-width="1.9"/>
<line x1="1069.68" y1="829.43" x2="1119.31" y2="664.96" stroke="#8080ff" stroke-width="1.9"/>
<line x1="672.40" y1="558.52" x2="852.71" y2="612.93" stroke="#8080ff" stroke-width="1.9"/>
<line x1="911.11" y1="630.55" x2="1096.46" y2="686.47" stroke="#8080ff" stroke-width="1.9"/>
<polygon points="657.40,554.00 677.04,549.16 671.09,568.89" fill="#8080ff"/>
<polygon points="1111.45,691.00 1097.77,676.11 1091.82,695.83" fill="#8080ff"/>
<circle cx="275.9" cy="855.1" r="7.9" fill="#0000ff"/>
<circle cx="607.95" cy="717.9" r="7.9" fill="#0000ff"/>
<circle cx="1062.0" cy="854.9" r="7.9" fill="#0000ff"/>
<text transform="translate(218.14,873.70) scale(0.9963,1)" font-size="33" fill="#000">A</text>
<text transform="translate(566.93,693.30) scale(0.9850,1)" font-size="33" fill="#000">B</text>
<text transform="translate(1087.02,863.70) scale(1.0001,1)" font-size="33" fill="#000">C</text>
<text transform="translate(287.01,897.70) scale(1.0689,1)" font-size="33" fill="#8080ff">(-a,0)</text>
<text transform="translate(1019.02,910.70) scale(1.0634,1)" font-size="33" fill="#8080ff">(a,0)</text>
<text transform="translate(405.11,721.70) scale(0.9730,1)" font-size="33" fill="#8080ff">t</text>
<text transform="translate(870.60,607.80) scale(0.9913,1)" font-size="33" fill="#8080ff">k</text>
<text transform="translate(874.11,656.60) scale(0.9849,1)" font-size="33" fill="#8080ff">t</text>
<rect x="866.2" y="619.8" width="27.6" height="1.4" fill="#8080ff" />
<rect x="1417" y="215" width="610" height="973" fill="#f0f0f0" />
<rect x="1418" y="216" width="608" height="590" fill="#f0f0f0" stroke="#6d6d6d" stroke-width="2"/>
<text transform="translate(1418.48,249.80) scale(0.9558,1)" font-size="29.5" fill="#000">Variables</text>
<rect x="1419" y="259" width="606" height="2" fill="#6d6d6d" />
<rect x="1419" y="261" width="606" height="249" fill="#ffffff" />
<rect x="1419" y="510" width="606" height="1.5" fill="#a0a0a0" />
<rect x="1560" y="263" width="1" height="245" fill="#e5eef7" />
<rect x="1752" y="263" width="1" height="245" fill="#e5eef7" />
<text transform="translate(1425.34,300.50) scale(1.0165,1)" font-size="29.5" fill="#000">Name</text>
<text transform="translate(1567.38,300.50) scale(0.9499,1)" font-size="29.5" fill="#000">Value</text>
<text transform="translate(1757.95,301.00) scale(1.0132,1)" font-size="29.5" fill="#000">Locked</text>
<rect x="1421" y="405.5" width="1602" height="0" fill="#000" />
<rect x="1421" y="405.5" width="602" height="43" fill="#cce8ff" stroke="#000" stroke-width="1" stroke-dasharray="1,1"/>
<rect x="1560" y="406" width="1" height="42" fill="#bcd9f0" />
<rect x="1752" y="406" width="1" height="42" fill="#bcd9f0" />
<text transform="translate(1425.96,348.80) scale(0.8315,1)" font-size="29.5" fill="#000">a</text>
<text transform="translate(1566.45,348.80) scale(0.9660,1)" font-size="29.5" fill="#000">4.0208333</text>
<text transform="translate(1425.44,393.60) scale(1.0386,1)" font-size="29.5" fill="#000">k</text>
<text transform="translate(1567.65,393.60) scale(0.9585,1)" font-size="29.5" fill="#000">17.83005</text>
<text transform="translate(1425.73,438.70) scale(1.2743,1)" font-size="29.5" fill="#000">t</text>
<text transform="translate(1566.92,438.70) scale(0.9633,1)" font-size="29.5" fill="#000">3.6742813</text>
<rect x="1760.6" y="339.6" width="8.9" height="2.4" fill="#000" />
<rect x="1760.6" y="384.40000000000003" width="8.9" height="2.4" fill="#000" />
<rect x="1760.6" y="429.3" width="8.9" height="2.4" fill="#000" />
<rect x="1431.5" y="524.7" width="246" height="47.799999999999955" fill="#f0f0f0" stroke="#7a7a7a" stroke-width="1.2"/>
<text transform="translate(1431.95,558.20) scale(1.2345,1)" font-size="29.5" fill="#000">t</text>
<rect x="1704.5" y="524.7" width="233" height="47.799999999999955" fill="#fff" stroke="#7a7a7a" stroke-width="1.2"/>
<text transform="translate(1714.82,558.20) scale(0.9640,1)" font-size="29.5" fill="#000">3.6742813</text>
<rect x="1965.7" y="525.7" width="44.5" height="45.5" fill="#e1e1e1" stroke="#a6a6a6" stroke-width="1.2"/>
<path d="M1980.5,539 A9.3,9.3 0 0 1 1998.3,543.5 V547.5" fill="none" stroke="#262626" stroke-width="4.6"/>
<rect x="1973.4" y="548" width="30.2" height="17.9" rx="3" fill="#a2c158"/>
<circle cx="1988.5" cy="553.6" r="2.5" fill="#e1e1e1"/>
<rect x="1986.9" y="554" width="3.2" height="8" fill="#e1e1e1"/>
<rect x="1985.8" y="559.6" width="5.4" height="2.4" fill="#e1e1e1"/>
<rect x="1437.8" y="605.9" width="44.600000000000136" height="45.30000000000007" fill="#e1e1e1" stroke="#adadad" stroke-width="1.2"/>
<rect x="1490.8" y="605.9" width="44.5" height="45.30000000000007" fill="#e1e1e1" stroke="#adadad" stroke-width="1.2"/>
<rect x="1543.7" y="605.9" width="44.59999999999991" height="45.30000000000007" fill="#e1e1e1" stroke="#adadad" stroke-width="1.2"/>
<rect x="1601.7" y="605.9" width="44.59999999999991" height="45.30000000000007" fill="#e1e1e1" stroke="#adadad" stroke-width="1.2"/>
<rect x="1659.7" y="605.9" width="44.59999999999991" height="45.30000000000007" fill="#e1e1e1" stroke="#adadad" stroke-width="1.2"/>
<rect x="1444.9" y="612.8" width="10" height="30.1" rx="2" fill="#262626"/>
<path d="M1475,614.5 Q1475,611.8 1472.5,613.5 L1458.5,626 Q1457,627.8 1458.5,629.6 L1472.5,642.2 Q1475,643.8 1475,641 Z" fill="#262626"/>
<path d="M1501,615 Q1501,612 1503.8,613.5 L1527.5,626.3 Q1529.5,627.8 1527.5,629.3 L1503.8,642.3 Q1501,643.6 1501,640.5 Z" fill="#262626"/>
<rect x="1553.9" y="613.3" width="10" height="29.7" rx="2.2" fill="#262626"/>
<rect x="1569" y="613.3" width="10" height="29.7" rx="2.2" fill="#262626"/>
<rect x="1609.3" y="613.3" width="30.4" height="29.7" rx="2.5" fill="#262626"/>
<path d="M1666.7,614.5 Q1666.7,611.8 1669.2,613.5 L1683.5,626 Q1685,627.8 1683.5,629.6 L1669.2,642.2 Q1666.7,643.8 1666.7,641 Z" fill="#262626"/>
<rect x="1687" y="612.8" width="10" height="30.1" rx="2" fill="#262626"/>
<rect x="1746.2" y="626.9" width="40" height="6" fill="#3d9ad6" />
<path d="M1785.6,620.9 H1793.8 V624 H1797 V627 H1800 V633 H1797 V636 H1793.8 V639 H1785.6 Z" fill="#3d9ad6"/>
<rect x="1826.8" y="587.8" width="39.40000000000009" height="40.5" fill="url(#spin)" stroke="#adadad" stroke-width="1.2"/>
<rect x="1826.8" y="629.3" width="39.40000000000009" height="40.80000000000007" fill="url(#spin)" stroke="#adadad" stroke-width="1.2"/>
<polygon points="1839.8,611.2 1852,611.2 1845.9,604.7" fill="#000"/>
<polygon points="1839.8,646.7 1852,646.7 1845.9,653.2" fill="#000"/>
<rect x="1448.5" y="696.5" width="546" height="8.6" fill="#e7eaea" stroke="#d6d6d6" stroke-width="1"/>
<polygon points="1802,678 1831,678 1831,713.9 1816.5,726.8 1802,713.9" fill="#0078d7"/>
<rect x="1431.5" y="733.4" width="193.70000000000005" height="58.5" fill="#fff" stroke="#7a7a7a" stroke-width="1.2"/>
<text transform="translate(1442.04,768.80) scale(1.0405,1)" font-size="29.5" fill="#000">-10</text>
<rect x="1817.8" y="733.4" width="193.29999999999995" height="58.5" fill="#fff" stroke="#7a7a7a" stroke-width="1.2"/>
<text transform="translate(1828.32,768.80) scale(0.9689,1)" font-size="29.5" fill="#000">10</text>
<rect x="1639" y="732.8" width="60" height="60" fill="#ffffff" />
<circle cx="1668.9" cy="766.4" r="19.9" fill="none" stroke="#262626" stroke-width="5.2"/>
<rect x="1661.4" y="734.8" width="15" height="6.8" rx="1.8" fill="#262626"/>
<rect x="1664.5" y="741" width="8.5" height="5" fill="#262626" />
<line x1="1684" y1="751.5" x2="1688.5" y2="747" stroke="#262626" stroke-width="4"/>
<polygon points="1668.9,766.4 1668.9,749.9 1677,749.9" fill="#e8899a"/>
<rect x="1667" y="752" width="3.7" height="14.4" fill="#262626" />
<circle cx="1668.9" cy="766.4" r="3.8" fill="#262626"/>
<rect x="1699.5" y="738.3" width="104.3" height="48.3" fill="#fff" stroke="#b5b5b5" stroke-width="1.2"/>
<path d="M1762.4,738.9 H1700.1 V786 H1762.4" fill="none" stroke="#7a7a7a" stroke-width="1.2"/>
<text transform="translate(1709.31,773.70) scale(1.0158,1)" font-size="29.5" fill="#000">4</text>
<rect x="1762.9" y="740.8" width="38.299999999999955" height="20.200000000000045" fill="url(#spin)" stroke="#adadad" stroke-width="1.2"/>
<rect x="1762.9" y="763.8" width="38.299999999999955" height="20.200000000000045" fill="url(#spin)" stroke="#adadad" stroke-width="1.2"/>
<polygon points="1775.8,754 1788.3,754 1782,747.8" fill="#000"/>
<polygon points="1775.8,770.6 1788.3,770.6 1782,777.3" fill="#000"/>
<rect x="1418" y="811" width="608" height="371" fill="#f0f0f0" stroke="#6d6d6d" stroke-width="2"/>
<text transform="translate(1417.16,845.00) scale(1.0096,1)" font-size="29.5" fill="#000">Functions</text>
<rect x="1419" y="854" width="606" height="2" fill="#6d6d6d" />
<rect x="1419" y="856" width="606" height="249" fill="#ffffff" />
<rect x="1419" y="1104.5" width="606" height="1.5" fill="#a0a0a0" />
<rect x="1560" y="858" width="1" height="246" fill="#e5eef7" />
<text transform="translate(1425.33,896.30) scale(1.0205,1)" font-size="29.5" fill="#000">Name</text>
<text transform="translate(1567.18,896.30) scale(0.9566,1)" font-size="29.5" fill="#000">Value</text>
<rect x="1444.9" y="1119.5" width="553.3" height="47.200000000000045" fill="#fff" stroke="#7a7a7a" stroke-width="1.2"/>
<rect x="0" y="1187" width="2028" height="2" fill="#a0a0a0" />
<rect x="0" y="1189" width="2028" height="48" fill="#f0f0f0" />
<rect x="183" y="1190" width="1" height="47" fill="#d7d7d7" />
<rect x="366" y="1190" width="1" height="47" fill="#d7d7d7" />
<rect x="751" y="1190" width="1" height="47" fill="#d7d7d7" />
<rect x="1373" y="1190" width="1" height="47" fill="#d7d7d7" />
<text transform="translate(1.98,1225.80) scale(0.9602,1)" font-size="29.5" fill="#000">Ready</text>
<text transform="translate(187.66,1225.80) scale(1.0016,1)" font-size="29.5" fill="#000">Selecting</text>
<text transform="translate(370.83,1225.20) scale(0.9689,1)" font-size="29.5" fill="#000">(3.34438,-2.99977)</text>
<rect x="755.7" y="1190.9" width="198.5999999999999" height="43.0" fill="#e1e1e1" stroke="#adadad" stroke-width="1.2"/>
<text transform="translate(758.58,1223.90) scale(0.8767,1)" font-size="29.5" fill="#000">Degrees</text>
<path d="M925.2,1208.1 L933.5,1216.5 L941.9,1208.1" fill="none" stroke="#333" stroke-width="1.4"/>
<rect x="2017" y="1213" width="5" height="5" fill="#c0c0c0" />
<rect x="2010" y="1220" width="5" height="5" fill="#c0c0c0" />
<rect x="2017" y="1220" width="5" height="5" fill="#c0c0c0" />
<rect x="2003" y="1227" width="5" height="5" fill="#c0c0c0" />
<rect x="2010" y="1227" width="5" height="5" fill="#c0c0c0" />
<rect x="2017" y="1227" width="5" height="5" fill="#c0c0c0" />
<path d="M996.7,1221.4 L1004,1229.2 H1000 V1238 H992.8 V1229.2 H989 Z" fill="#fff" stroke="#000" stroke-width="1.2"/>
<rect x="0" y="0" width="2028" height="1" fill="#5c5f64" />
<rect x="0" y="1237" width="2028" height="1" fill="#3a3a3a" />
<rect x="0" y="0" width="1.2" height="1238" fill="#4f5a66" />
<rect x="2026.8" y="0" width="1.2" height="1238" fill="#5a5d62" /></svg></body></html>
